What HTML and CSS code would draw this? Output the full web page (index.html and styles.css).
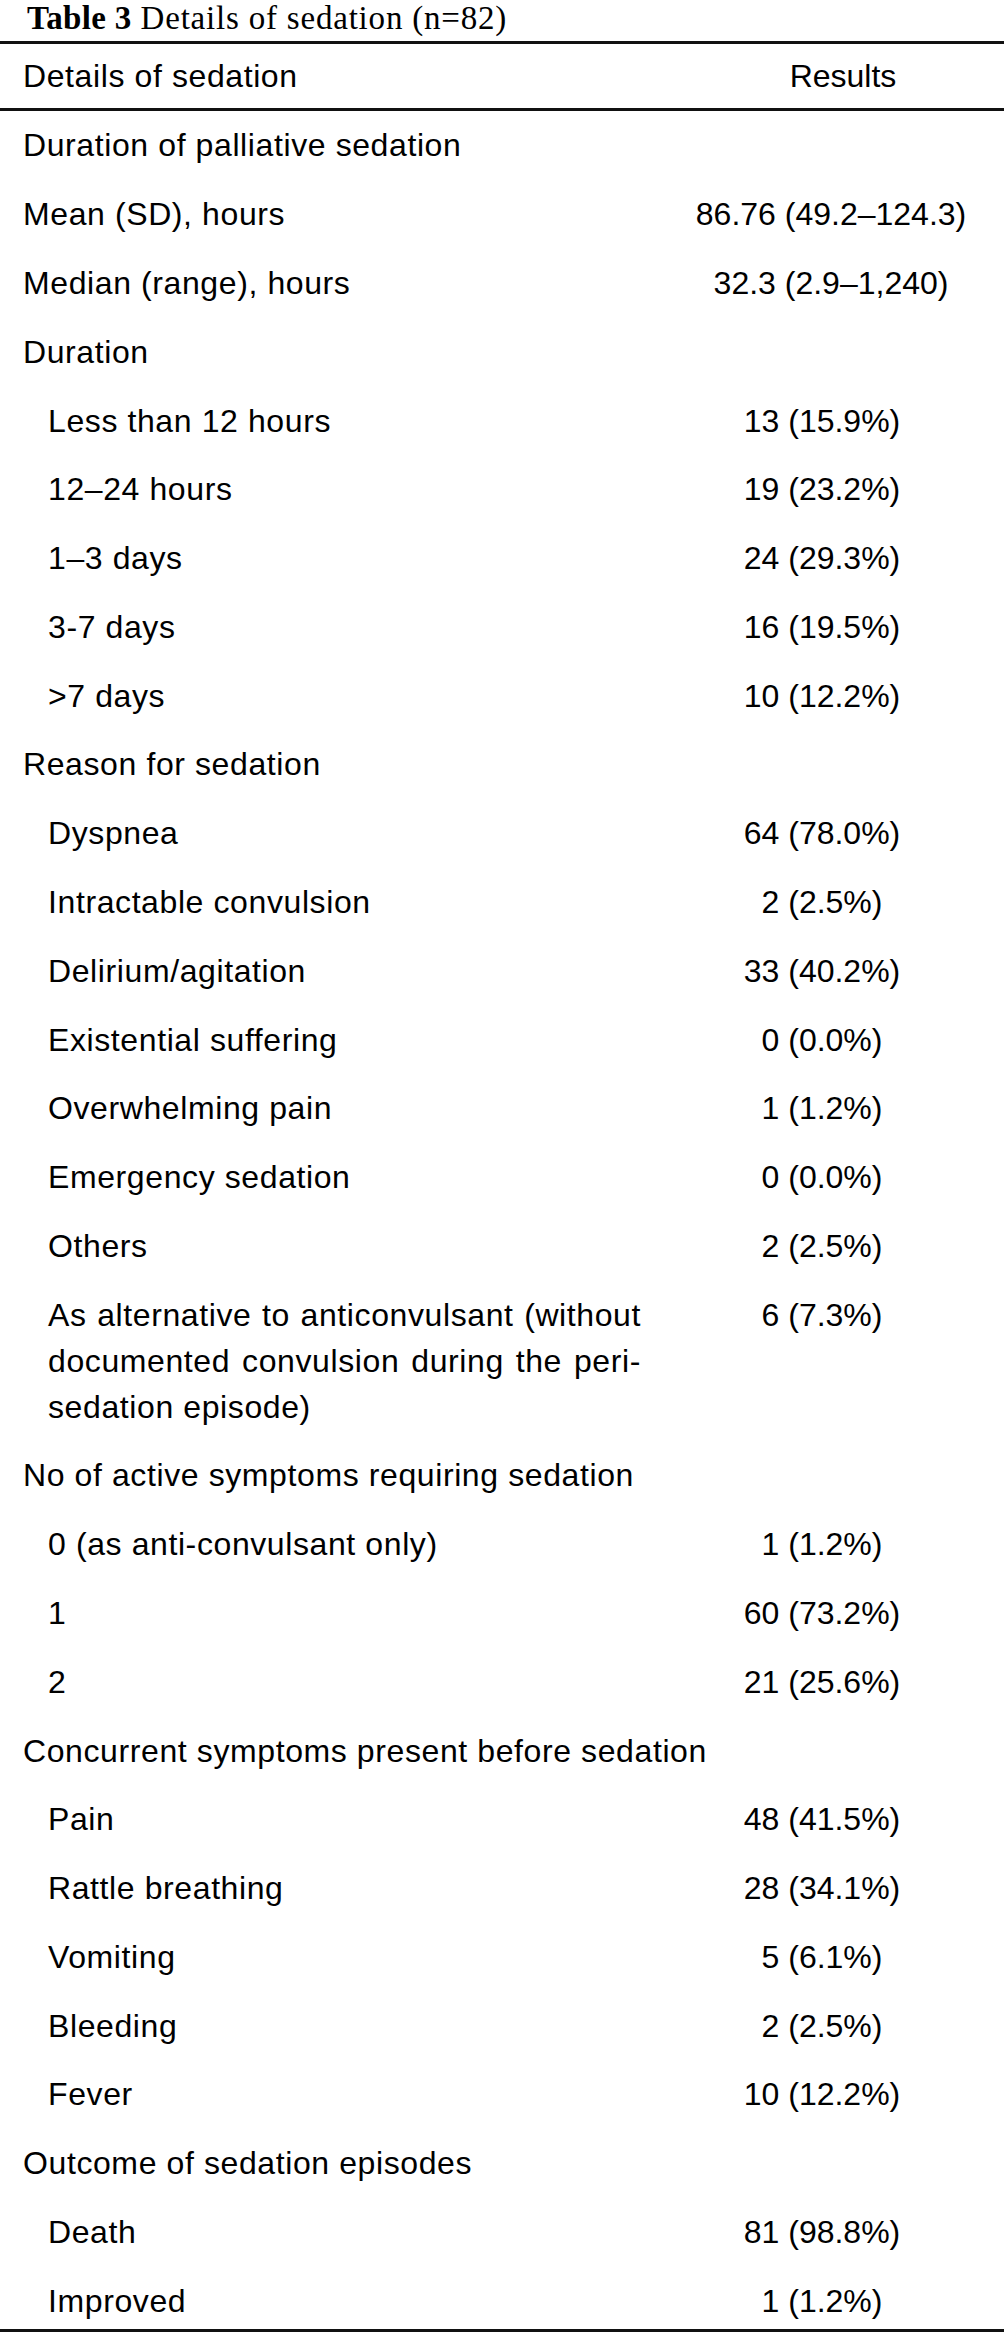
FILE: index.html
```html
<!DOCTYPE html>
<html lang="en">
<head>
<meta charset="utf-8">
<title>Table 3 Details of sedation (n=82)</title>
<link rel="stylesheet" href="styles.css">
</head>
<body>
<div class="caption"><b class="label">Table 3</b> Details of sedation (n=82)</div>
<table class="data">
  <colgroup><col class="c1"><col class="c2"></colgroup>
  <thead>
    <tr><th class="lab">Details of sedation</th><th class="val head">Results</th></tr>
  </thead>
  <tbody>
    <tr><td class="lab sec" colspan="2">Duration of palliative sedation</td></tr>
    <tr><td class="lab">Mean (SD), hours</td><td class="val wide">86.76 (49.2–124.3)</td></tr>
    <tr><td class="lab">Median (range), hours</td><td class="val wide">32.3 (2.9–1,240)</td></tr>
    <tr><td class="lab sec" colspan="2">Duration</td></tr>
    <tr><td class="lab sub">Less than 12 hours</td><td class="val">13 (15.9%)</td></tr>
    <tr><td class="lab sub">12–24 hours</td><td class="val">19 (23.2%)</td></tr>
    <tr><td class="lab sub">1–3 days</td><td class="val">24 (29.3%)</td></tr>
    <tr><td class="lab sub">3-7 days</td><td class="val">16 (19.5%)</td></tr>
    <tr><td class="lab sub">&gt;7 days</td><td class="val">10 (12.2%)</td></tr>
    <tr><td class="lab sec" colspan="2">Reason for sedation</td></tr>
    <tr><td class="lab sub">Dyspnea</td><td class="val">64 (78.0%)</td></tr>
    <tr><td class="lab sub">Intractable convulsion</td><td class="val">2 (2.5%)</td></tr>
    <tr><td class="lab sub">Delirium/agitation</td><td class="val">33 (40.2%)</td></tr>
    <tr><td class="lab sub">Existential suffering</td><td class="val">0 (0.0%)</td></tr>
    <tr><td class="lab sub">Overwhelming pain</td><td class="val">1 (1.2%)</td></tr>
    <tr><td class="lab sub">Emergency sedation</td><td class="val">0 (0.0%)</td></tr>
    <tr><td class="lab sub">Others</td><td class="val">2 (2.5%)</td></tr>
    <tr><td class="lab sub just">As alternative to anticonvulsant (without documented convulsion during the peri-sedation episode)</td><td class="val">6 (7.3%)</td></tr>
    <tr><td class="lab sec" colspan="2">No of active symptoms requiring sedation</td></tr>
    <tr><td class="lab sub">0 (as anti-convulsant only)</td><td class="val">1 (1.2%)</td></tr>
    <tr><td class="lab sub">1</td><td class="val">60 (73.2%)</td></tr>
    <tr><td class="lab sub">2</td><td class="val">21 (25.6%)</td></tr>
    <tr><td class="lab sec" colspan="2">Concurrent symptoms present before sedation</td></tr>
    <tr><td class="lab sub">Pain</td><td class="val">48 (41.5%)</td></tr>
    <tr><td class="lab sub">Rattle breathing</td><td class="val">28 (34.1%)</td></tr>
    <tr><td class="lab sub">Vomiting</td><td class="val">5 (6.1%)</td></tr>
    <tr><td class="lab sub">Bleeding</td><td class="val">2 (2.5%)</td></tr>
    <tr><td class="lab sub">Fever</td><td class="val">10 (12.2%)</td></tr>
    <tr><td class="lab sec" colspan="2">Outcome of sedation episodes</td></tr>
    <tr><td class="lab sub">Death</td><td class="val">81 (98.8%)</td></tr>
    <tr class="last"><td class="lab sub">Improved</td><td class="val">1 (1.2%)</td></tr>
  </tbody>
</table>
</body>
</html>
```

FILE: styles.css
```css
html, body {
  margin: 0;
  padding: 0;
  background: #ffffff;
  color: #000000;
}

body {
  width: 1004px;
}

.caption {
  font-family: "Liberation Serif", "Times New Roman", serif;
  font-size: 33px;
  letter-spacing: 0.8px;
  line-height: 36px;
  height: 36px;
  padding-left: 27px;
  margin-bottom: 5px;
  white-space: nowrap;
}

.caption .label {
  font-weight: bold;
  letter-spacing: 0.3px;
}

.data {
  width: 1004px;
  table-layout: fixed;
  border-collapse: separate;
  border-spacing: 0;
  font-family: "Liberation Sans", Arial, Helvetica, sans-serif;
  font-size: 32px;
  line-height: 46px;
}

.c1 { width: 682px; }
.c2 { width: 322px; }

.data th {
  font-weight: normal;
  text-align: left;
  vertical-align: top;
  padding: 9px 41px 9px 23px;
  border-top: 3px solid #111111;
  border-bottom: 3px solid #111111;
}

.data td {
  vertical-align: top;
  padding: 11.4px 41px 11.4px 23px;
}

.data .lab {
  letter-spacing: 0.6px;
}

.data td.sec {
  white-space: nowrap;
}

.data td.sub {
  padding-left: 48px;
}

.data td.just {
  text-align: justify;
}

.data .val {
  text-align: center;
  padding-left: 0;
  padding-right: 42px;
  white-space: nowrap;
}

.data th.head {
  text-align: center;
  padding-left: 0;
  padding-right: 0;
}

.data td.wide {
  padding-right: 24px;
}

.data tr.last td {
  padding-bottom: 5.6px;
  border-bottom: 3px solid #111111;
}
```
